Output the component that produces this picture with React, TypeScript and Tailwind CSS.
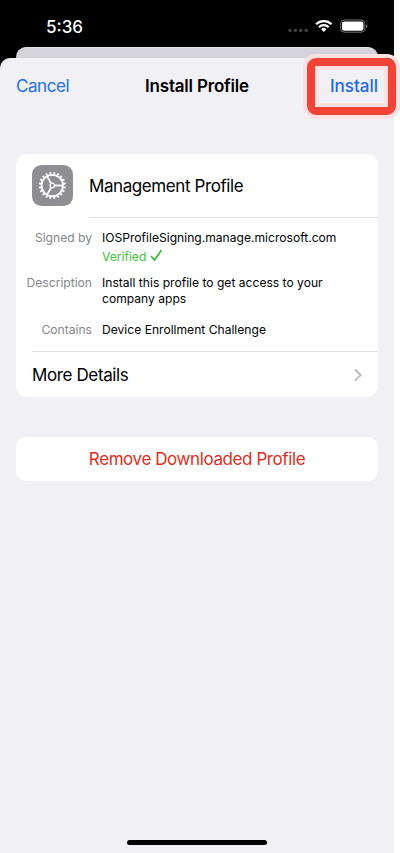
const FONT = "font-['Inter','Liberation_Sans',sans-serif]";

function Gear() {
  const teeth = Array.from({ length: 20 }, (_, i) => i * 18);
  return (
    <svg width="41" height="41" viewBox="0 0 41 41" className="shrink-0">
      <rect width="41" height="41" rx="9.5" fill="#8e8e93" />
      <g stroke="#fff" fill="none" transform="translate(20.3 20.5)">
        <circle r="10.7" strokeWidth="1.8" />
        {teeth.map((a) => (
          <path key={a} d="M11.2 0H13.6" strokeWidth="1.8" transform={`rotate(${a + 9})`} />
        ))}
        <circle r="2.3" strokeWidth="1.3" />
        {[0, 120, 240].map((a) => (
          <path key={a} d="M2.6 0H10.5" strokeWidth="1.8" transform={`rotate(${a})`} />
        ))}
      </g>
    </svg>
  );
}

function StatusBar() {
  return (
    <div className="flex h-[47px] items-start pl-[46px] text-white">
      <span className="mt-[15px] w-[242px] text-[17px] leading-[24px] font-medium">5:36</span>
      <svg width="80" height="16" viewBox="0 0 80 16" className="mt-[18px] shrink-0">
        {[2, 7.4, 12.8, 18.2].map((x) => (
          <circle key={x} cx={x} cy="12.5" r="1.7" fill="#434343" />
        ))}
        <g transform="translate(35.8 0)" fill="none" stroke="#fff" strokeWidth="2.3">
          <path d="M-7.7 6.2A11 11 0 0 1 7.7 6.2" />
          <path d="M-4.9 9.2A7 7 0 0 1 4.9 9.2" />
          <path d="M-2.7 11.2A3.8 3.8 0 0 1 2.7 11.2L0 14Z" fill="#fff" stroke="none" />
        </g>
        <rect x="52.6" y="2" width="24.2" height="12.2" rx="3.8" fill="none" stroke="#737373" />
        <rect x="54" y="3.4" width="21.4" height="9.4" rx="2.4" fill="#fff" />
        <path d="M78.1 6.2Q79.6 6.8 79.6 8.1T78.1 10Z" fill="#777" />
      </svg>
    </div>
  );
}

export default function App() {
  return (
    <div className={`relative h-[853px] w-[400px] overflow-hidden bg-white ${FONT}`}>
      <div className="flex h-full w-[394px] flex-col bg-black">
        <StatusBar />
        <div className="mx-4 -mb-2.5 h-[20.5px] shrink-0 rounded-t-[10px] border-t border-[#e3e2e7] bg-[#d4d3d9]" />
        <main className="flex flex-1 flex-col rounded-t-[10px] bg-[#f1f0f5]">
          <header className="flex h-[57px] items-center justify-between px-4 pt-[1px] text-[17px]">
            <span className="w-[80px] tracking-[-0.45px] text-[#1b6ef3]">Cancel</span>
            <h1 className="font-semibold tracking-[-0.2px] whitespace-nowrap text-black">Install Profile</h1>
            <span className="w-[80px] text-right font-medium text-[#1f68e8]">Install</span>
          </header>

          <section className="mx-4 mt-[39.5px] h-[243px] rounded-[11px] bg-white text-black">
            <div className="flex h-[63.5px] pl-4">
              <div className="flex w-[57px] items-start pt-[11px]">
                <Gear />
              </div>
              <div className="flex flex-1 items-center border-b border-[#e2e2e4] pt-[2px] text-[17px] tracking-[-0.41px]">
                Management Profile
              </div>
            </div>
            <dl className="grid h-[133.5px] grid-cols-[76px_1fr] content-start gap-x-[10px] pt-[11.5px] text-[12.1px] leading-[17px]">
              <dt className="text-right text-[#85858a]">Signed by</dt>
              <dd className="whitespace-nowrap">
                IOSProfileSigning.manage.microsoft.com
                <div className="mt-[2px] flex items-center text-[#3fc13f]">
                  Verified
                  <svg width="13" height="13" viewBox="0 0 13 13" className="-mt-[3px] ml-[4px]">
                    <path d="M1 7L4.5 11L11.5 1" fill="none" stroke="#3fc13f" strokeWidth="1.8" />
                  </svg>
                </div>
              </dd>
              <dt className="mt-[9px] text-right text-[#85858a]">Description</dt>
              <dd className="mt-[9.5px] w-[240px] leading-[16.5px]">Install this profile to get access to your company apps</dd>
              <dt className="mt-[13px] text-right text-[#85858a]">Contains</dt>
              <dd className="mt-[13px]">Device Enrollment Challenge</dd>
            </dl>
            <div className="ml-4 flex h-[46px] items-center justify-between border-t border-[#e2e2e4] pr-[15.5px] text-[17px]">
              <span className="pt-[2px] tracking-[-0.38px]">More Details</span>
              <svg width="10" height="14" viewBox="0 0 10 14">
                <path d="M2 1.5L7.7 7L2 12.5" fill="none" stroke="#bcbcc0" strokeWidth="1.8" />
              </svg>
            </div>
          </section>

          <button className="mx-4 mt-10 h-[44px] rounded-[10px] bg-white pt-[2px] text-[17px] tracking-[-0.41px] text-[#e02d20]">
            Remove Downloaded Profile
          </button>
          <div className="mt-auto mb-[8px] ml-[127px] h-[5px] w-[140px] rounded-full bg-black" />
        </main>
      </div>
      <div className="absolute top-[54px] left-[303px] h-[65px] w-[97px] rounded-[13px] border-4 border-[#fde1e0]">
        <div className="h-full w-full rounded-[9px] border-8 border-[#f14437]">
          <div className="h-full w-full rounded-[2px] border-4 border-[#fde1e0]" />
        </div>
      </div>
    </div>
  );
}
